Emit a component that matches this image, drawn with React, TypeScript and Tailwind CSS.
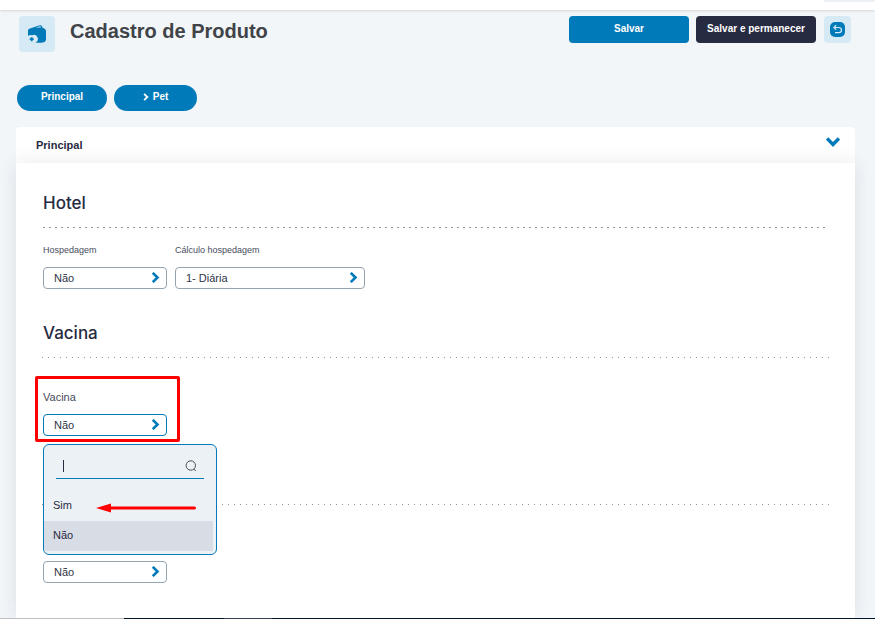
import { useState } from "react"
import type { ReactNode } from "react"

const Chevron = ({ className = "" }: { className?: string }) => (
  <svg viewBox="0 0 8 10" className={className} fill="none" stroke="currentColor" strokeWidth="2.4" aria-hidden="true">
    <path d="M1.5 0.8 5.8 5 1.5 9.2" />
  </svg>
)

type SelectFieldProps = {
  id: string
  label: string
  options: string[]
  width: string
  value?: string
  active?: boolean
  hideLabel?: boolean
  small?: boolean
}

function SelectField({ id, label, options, width, value, active, hideLabel, small }: SelectFieldProps) {
  return (
    <div className={"flex flex-col " + width}>
      {!hideLabel && (
        <label htmlFor={id} className={"mb-[7px] leading-5 text-[#474c5c] " + (small ? "text-[9px]" : "text-[11px]")}>
          {label}
        </label>
      )}
      <div className="grid items-center">
        <select
          id={id}
          aria-label={hideLabel ? label : undefined}
          defaultValue={value}
          className={
            "col-start-1 row-start-1 h-[22px] w-full appearance-none rounded border bg-white pl-[10px] text-[11px] text-[#2f3447] outline-none " +
            (active ? "border-[#007ab8]" : "border-[#93a4b3]")
          }
        >
          {options.map(option => (
            <option key={option}>{option}</option>
          ))}
        </select>
        <Chevron className="pointer-events-none col-start-1 row-start-1 mb-px mr-[7px] h-[11px] w-[9px] justify-self-end text-[#007ab8]" />
      </div>
    </div>
  )
}

const Section = ({ title, children }: { title: string; children: ReactNode }) => (
  <section>
    <h2 className="font-['Inter',sans-serif] text-[17px] font-medium leading-6 text-[#272b41]">{title}</h2>
    {children}
  </section>
)

const DottedLine = ({ wide }: { wide?: boolean }) => (
  <svg className="block h-px w-full" aria-hidden="true">
    <line x1="0" y1="0.5" x2="100%" y2="0.5" stroke="#8f959b" strokeDasharray={wide ? "2 4" : "1 5"} />
  </svg>
)

export default function App() {
  const [selected, setSelected] = useState("Não")

  return (
    <div className="flex h-screen flex-col overflow-hidden bg-[#f2f6f9] font-['Liberation_Sans',Arial,sans-serif]">
      <div className="flex h-[10px] shrink-0 justify-end bg-white shadow-sm">
        <div className="h-0.5 w-[51px] rounded-bl bg-[#edf1f5]" />
      </div>

      <header className="flex shrink-0 items-start gap-[15px] pl-[19px] pr-6 pt-[6px]">
        <div className="flex size-9 items-center justify-center rounded bg-[#d5eaf4]">
          <svg viewBox="0 0 18 18" className="size-[18px]" aria-hidden="true">
            <path
              fill="#007ab8"
              d="M0 6C0 4.600.8 3.900 2 3.500L11 .4c1.600-.5 3 .1 3.400 1.500l.2 1.100c2 .1 3.400 1.500 3.400 3.500v6.900c0 2.500-1.100 4-3.400 4.200-2.300.3-4.700.2-7 0A4 4 0 0 0 4 10.300a4 4 0 0 0-4 .8Z"
            />
            <path fill="#d5eaf4" d="m7.500 2.700 4.200-1.400c.8-.2 1.300.1 1.500.9Z" />
            <path stroke="#007ab8" strokeWidth="1.800" d="M3.700 12.200v4M1.700 14.200h4" />
          </svg>
        </div>
        <h1 className="grow text-xl font-bold leading-[30px] text-[#404347]">Cadastro de Produto</h1>
        <div className="flex items-center gap-[7px]">
          <button className="h-[27px] w-[120px] rounded bg-[#007ab8] pb-0.5 text-[10px] font-bold text-white">Salvar</button>
          <button className="h-[27px] w-[120px] rounded bg-[#272b41] pb-0.5 text-[10px] font-bold text-white">
            Salvar e permanecer
          </button>
          <button aria-label="Voltar" className="ml-px flex size-[27px] items-center justify-center rounded bg-[#d5eaf4]">
            <svg viewBox="0 0 15 15" className="size-[15px]" fill="none" aria-hidden="true">
              <rect width="15" height="15" rx="5" fill="#007ab8" />
              <path stroke="#d5eaf4" strokeWidth="1.2" d="M6.200 3.200 3.900 5.500l2.300 2.300M4 5.500h4.900a2.600 2.600 0 0 1 0 5.200H5" />
            </svg>
          </button>
        </div>
      </header>

      <nav className="mt-[33px] flex shrink-0 gap-[7px] pl-[17px] text-[10px] font-bold text-white">
        <button className="h-[26px] w-[90px] rounded-full bg-[#007ab8] pb-[3px]">Principal</button>
        <button className="flex h-[26px] w-[83px] items-center justify-center gap-1 rounded-full bg-[#007ab8] pb-[3px]">
          <Chevron className="h-2 w-1.5" />
          Pet
        </button>
      </nav>

      <main className="ml-4 mr-5 mt-4 flex grow flex-col">
        <button className="flex h-9 shrink-0 items-center justify-between rounded-t bg-white pl-5 pr-4 text-[11px] font-bold text-[#272b41]">
          Principal
          <Chevron className="mb-1.5 h-[14px] w-3 rotate-90 text-[#007ab8]" />
        </button>

        <div className="grow bg-white pl-[27px] pr-[26px] pt-7 shadow-[0_0_18px_rgba(39,43,65,0.1)]">
          <Section title="Hotel">
            <div className="mr-1 mt-3">
              <DottedLine wide />
            </div>
            <div className="mt-3 flex gap-2">
              <SelectField id="hospedagem" label="Hospedagem" options={["Não", "Sim"]} width="w-[124px]" small />
              <SelectField id="calculo" label="Cálculo hospedagem" options={["1- Diária"]} width="w-[190px]" small />
            </div>
          </Section>

          <div className="mt-8">
            <Section title="Vacina">
              <div className="-ml-px mt-3">
                <DottedLine />
              </div>
              <div className="relative -ml-2 mt-[18px] w-[145px] rounded-xs border-3 border-[#ff0000] pb-[3px] pl-[5px] pt-2">
                <SelectField
                  key={selected}
                  id="vacina"
                  label="Vacina"
                  options={["Não", "Sim"]}
                  width="w-[124px]"
                  value={selected}
                  active
                />
                <div className="absolute left-[5px] top-[65px] h-[111px] w-[174px] rounded-md border border-[#007ab8] bg-[#ecf1f5] pt-[9px] text-[11px] text-[#272b41]">
                  <div className="mx-3">
                    <div className="flex h-6 items-center pr-[7px]">
                      <span className="ml-[7px] h-3 w-px bg-[#272b41]" />
                      <input aria-label="Pesquisar" className="w-0 grow bg-transparent outline-none" />
                      <svg viewBox="0 0 12 12" className="size-3" fill="none" stroke="#474c5c" aria-hidden="true">
                        <circle cx="5.8" cy="5.5" r="4.7" />
                        <path d="m8.8 9 2 2" />
                      </svg>
                    </div>
                    <div className="h-px bg-[#007ab8]" />
                  </div>
                  <div role="listbox" aria-label="Vacina" className="mr-[3px] mt-3 flex flex-col">
                    {["Sim", "Não"].map(option => (
                      <button
                        key={option}
                        role="option"
                        aria-selected={option === selected}
                        onClick={() => setSelected(option)}
                        className={"flex h-[30px] items-center gap-6 pb-0.5 pl-[9px] " + (option === selected ? "bg-[#d8dce4]" : "")}
                      >
                        {option}
                        {option === "Sim" && (
                          <svg viewBox="0 0 100 10" className="mt-1.5 h-[10px] w-[100px]" aria-hidden="true">
                            <path fill="#ff0000" d="M0 5 15 0.5v3H98.5a1.5 1.5 0 0 1 0 3H15v3Z" />
                          </svg>
                        )}
                      </button>
                    ))}
                  </div>
                </div>
              </div>
            </Section>
          </div>

          <div className="mt-[62px]">
            <div className="-ml-px">
              <DottedLine />
            </div>
            <div className="pt-14">
              <SelectField id="situacao" label="Situação" options={["Não", "Sim"]} width="w-[124px]" hideLabel />
            </div>
          </div>
        </div>
      </main>

      <footer className="flex h-px shrink-0">
        <div className="w-[124px] bg-[#bfbfbf]" />
        <div className="w-[100px] bg-[#031525]" />
        <div className="w-12 bg-[#35424f]" />
        <div className="grow bg-[#031525]" />
      </footer>
    </div>
  )
}
